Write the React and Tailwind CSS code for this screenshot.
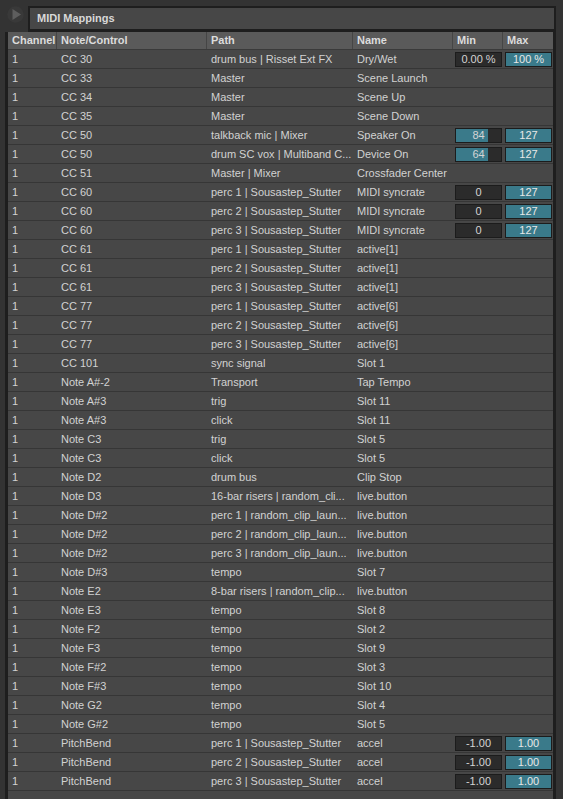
const rows = [
  ["1", "CC 30", "drum bus | Risset Ext FX", "Dry/Wet", "0.00 %", "100 %", 0],
  ["1", "CC 33", "Master", "Scene Launch"],
  ["1", "CC 34", "Master", "Scene Up"],
  ["1", "CC 35", "Master", "Scene Down"],
  ["1", "CC 50", "talkback mic | Mixer", "Speaker On", "84", "127", 32],
  ["1", "CC 50", "drum SC vox | Multiband C...", "Device On", "64", "127", 32],
  ["1", "CC 51", "Master | Mixer", "Crossfader Center"],
  ["1", "CC 60", "perc 1 | Sousastep_Stutter", "MIDI syncrate", "0", "127", 0],
  ["1", "CC 60", "perc 2 | Sousastep_Stutter", "MIDI syncrate", "0", "127", 0],
  ["1", "CC 60", "perc 3 | Sousastep_Stutter", "MIDI syncrate", "0", "127", 0],
  ["1", "CC 61", "perc 1 | Sousastep_Stutter", "active[1]"],
  ["1", "CC 61", "perc 2 | Sousastep_Stutter", "active[1]"],
  ["1", "CC 61", "perc 3 | Sousastep_Stutter", "active[1]"],
  ["1", "CC 77", "perc 1 | Sousastep_Stutter", "active[6]"],
  ["1", "CC 77", "perc 2 | Sousastep_Stutter", "active[6]"],
  ["1", "CC 77", "perc 3 | Sousastep_Stutter", "active[6]"],
  ["1", "CC 101", "sync signal", "Slot 1"],
  ["1", "Note A#-2", "Transport", "Tap Tempo"],
  ["1", "Note A#3", "trig", "Slot 11"],
  ["1", "Note A#3", "click", "Slot 11"],
  ["1", "Note C3", "trig", "Slot 5"],
  ["1", "Note C3", "click", "Slot 5"],
  ["1", "Note D2", "drum bus", "Clip Stop"],
  ["1", "Note D3", "16-bar risers | random_cli...", "live.button"],
  ["1", "Note D#2", "perc 1 | random_clip_laun...", "live.button"],
  ["1", "Note D#2", "perc 2 | random_clip_laun...", "live.button"],
  ["1", "Note D#2", "perc 3 | random_clip_laun...", "live.button"],
  ["1", "Note D#3", "tempo", "Slot 7"],
  ["1", "Note E2", "8-bar risers | random_clip...", "live.button"],
  ["1", "Note E3", "tempo", "Slot 8"],
  ["1", "Note F2", "tempo", "Slot 2"],
  ["1", "Note F3", "tempo", "Slot 9"],
  ["1", "Note F#2", "tempo", "Slot 3"],
  ["1", "Note F#3", "tempo", "Slot 10"],
  ["1", "Note G2", "tempo", "Slot 4"],
  ["1", "Note G#2", "tempo", "Slot 5"],
  ["1", "PitchBend", "perc 1 | Sousastep_Stutter", "accel", "-1.00", "1.00", 0],
  ["1", "PitchBend", "perc 2 | Sousastep_Stutter", "accel", "-1.00", "1.00", 0],
  ["1", "PitchBend", "perc 3 | Sousastep_Stutter", "accel", "-1.00", "1.00", 0],
];

const cols = "grid grid-cols-[49px_150px_146px_100px_50px_50px]";

const MinBox = ({ value, fill }) => (
  <div className="relative ml-[2px] w-[47px] h-[15px] bg-[#2b2b2b] border border-[#1c1c1c] overflow-hidden">
    {fill > 0 && <div className="absolute left-0 top-0 bottom-0 bg-[#3a7a8a]" style={{ width: fill }} />}
    <span className="relative flex h-full items-center justify-center text-[#d4d4d4]">{value}</span>
  </div>
);

const MaxBox = ({ value }) => (
  <div className="ml-[2px] w-[47px] h-[15px] bg-[#3a7a8a] border border-[#1c1c1c] flex items-center justify-center text-[#e8e8e8]">
    {value}
  </div>
);

export default function App() {
  return (
    <div
      className="w-[563px] h-[799px] bg-[#333333] overflow-hidden text-[11px] text-[#d2d2d2]"
      style={{ fontFamily: '"Liberation Sans", Arial, sans-serif' }}
    >
      <div className="flex h-[32px]">
        <div className="w-[28px] flex items-start justify-center pt-[6px] pl-[2px]">
          <svg width="17" height="17" viewBox="0 0 17 17">
            <circle cx="8.5" cy="8.5" r="8.2" fill="#393939" />
            <path d="M5.5 3 L14 8.5 L5.5 14 Z" fill="#5e5e5e" />
          </svg>
        </div>
        <div className="mt-[6px] w-[528px] h-[26px] border-2 border-b-[3px] border-[#1e1e1e] bg-[#474747] flex items-center pl-[7px] font-bold text-[#d8d8d8]">
          MIDI Mappings
        </div>
      </div>
      <div className="ml-[5px] w-[551px] border-l-[3px] border-r-[3px] border-[#1e1e1e] bg-[#474747] h-[767px]">
        <div className={`${cols} h-[18px] bg-[#5a5a5a] border-b border-[#3a3a3a] font-bold text-[#dcdcdc]`}>
          {["Channel", "Note/Control", "Path", "Name", "Min", "Max"].map((h, i) => (
            <div key={h} className={`pl-[4px] flex items-center ${i < 5 ? "border-r border-[#454545]" : ""}`}>
              {h}
            </div>
          ))}
        </div>
        {rows.map((r, i) => (
          <div key={i} className={`${cols} h-[19px] border-b border-[#363636] items-center`}>
            <div className="pl-[4px]">{r[0]}</div>
            <div className="pl-[4px]">{r[1]}</div>
            <div className="pl-[4px] whitespace-nowrap">{r[2]}</div>
            <div className="pl-[4px] whitespace-nowrap">{r[3]}</div>
            <div>{r[4] && <MinBox value={r[4]} fill={r[6]} />}</div>
            <div>{r[5] && <MaxBox value={r[5]} />}</div>
          </div>
        ))}
      </div>
    </div>
  );
}
